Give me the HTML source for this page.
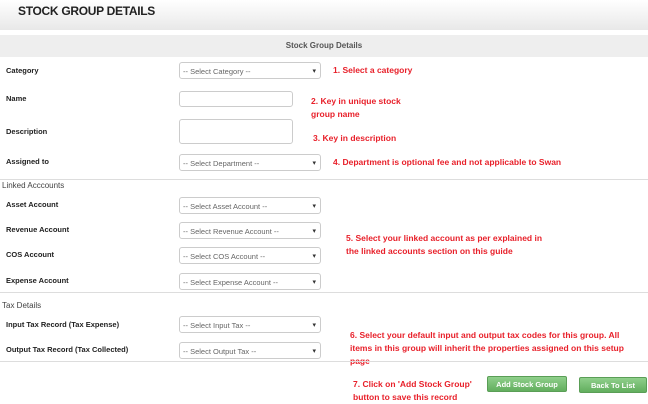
<!DOCTYPE html>
<html><head><meta charset="utf-8"><style>
*{box-sizing:border-box;margin:0;padding:0}
body{width:648px;height:403px;background:#fff;font-family:"Liberation Sans",sans-serif;position:relative;overflow:hidden;color:#333}
.a{position:absolute}
.hdr{left:0;top:0;width:648px;height:30px;background:linear-gradient(#fff,#e8e8e8)}
.hdr span{position:absolute;left:18px;top:4px;font-size:12px;font-weight:bold;color:#222;letter-spacing:-0.3px}
.band{left:0;top:35px;width:648px;height:22px;background:#eeeeee;font-size:8px;font-weight:bold;color:#555;text-align:center;line-height:22px}
.lbl{left:6px;font-size:7.5px;font-weight:bold;color:#222}
.sel{left:179px;width:142px;height:17px;border:1px solid #ccc;border-radius:3px;font-size:7.5px;color:#666;padding:4px 3px;background:#fff}
.sel:after{content:"▾";position:absolute;right:4px;top:4px;font-size:7px;color:#333}
.inp{left:179px;width:114px;border:1px solid #ccc;border-radius:3px;background:#fff}
.red{color:#e8202a;font-weight:bold;font-size:8.5px;line-height:13px}
.line{left:0;width:648px;height:1px;background:#ddd}
.sec{left:2px;font-size:8px;color:#444}
.btn{height:16px;border-radius:2px;background:linear-gradient(#8fcf8b,#62ae5e);color:#fff;font-size:7.5px;font-weight:bold;text-align:center;line-height:16px;border:1px solid #5a9e56}
</style></head><body>
<div class="a hdr"><span>STOCK GROUP DETAILS</span></div>
<div class="a band">Stock Group Details</div>

<div class="a lbl" style="top:66px">Category</div>
<div class="a sel" style="top:62px">-- Select Category --</div>
<div class="a red" style="left:333px;top:64px">1. Select a category</div>

<div class="a lbl" style="top:94px">Name</div>
<div class="a inp" style="top:91px;height:16px"></div>
<div class="a red" style="left:311px;top:95px">2. Key in unique stock<br>group name</div>

<div class="a lbl" style="top:127px">Description</div>
<div class="a inp" style="top:119px;height:25px"></div>
<div class="a red" style="left:313px;top:132px">3. Key in description</div>

<div class="a lbl" style="top:157px">Assigned to</div>
<div class="a sel" style="top:154px">-- Select Department --</div>
<div class="a red" style="left:333px;top:156px">4. Department is optional fee and not applicable to Swan</div>

<div class="a line" style="top:179px"></div>
<div class="a sec" style="top:181px">Linked Acccounts</div>

<div class="a lbl" style="top:200px">Asset Account</div>
<div class="a sel" style="top:197px">-- Select Asset Account --</div>
<div class="a lbl" style="top:225px">Revenue Account</div>
<div class="a sel" style="top:222px">-- Select Revenue Account --</div>
<div class="a lbl" style="top:250px">COS Account</div>
<div class="a sel" style="top:247px">-- Select COS Account --</div>
<div class="a lbl" style="top:276px">Expense Account</div>
<div class="a sel" style="top:273px">-- Select Expense Account --</div>
<div class="a red" style="left:346px;top:232px">5. Select your linked account as per explained in<br>the linked accounts section on this guide</div>

<div class="a line" style="top:292px"></div>
<div class="a sec" style="top:301px">Tax Details</div>

<div class="a lbl" style="top:320px">Input Tax Record (Tax Expense)</div>
<div class="a sel" style="top:316px">-- Select Input Tax --</div>
<div class="a lbl" style="top:345px">Output Tax Record (Tax Collected)</div>
<div class="a sel" style="top:342px">-- Select Output Tax --</div>
<div class="a red" style="left:350px;top:329px">6. Select your default input and output tax codes for this group. All<br>items in this group will inherit the properties assigned on this setup<br>page</div>

<div class="a line" style="top:361px"></div>
<div class="a red" style="left:353px;top:378px">7. Click on 'Add Stock Group'<br>button to save this record</div>
<div class="a btn" style="left:487px;top:376px;width:80px">Add Stock Group</div>
<div class="a btn" style="left:579px;top:377px;width:68px">Back To List</div>
</body></html>
